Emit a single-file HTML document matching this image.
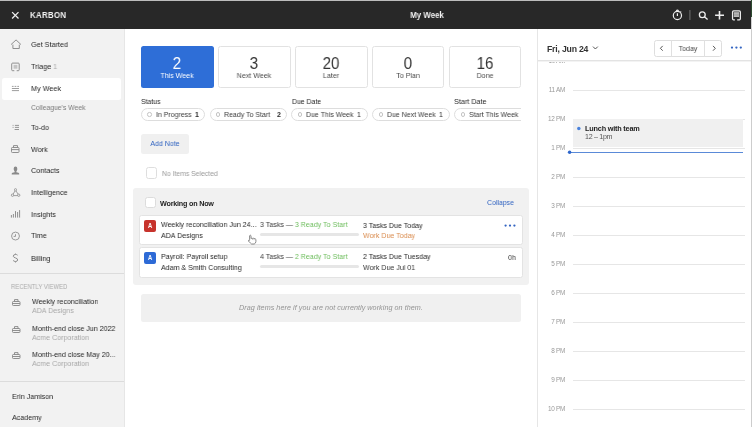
<!DOCTYPE html>
<html><head><meta charset="utf-8"><style>
html,body{margin:0;padding:0;width:752px;height:427px;overflow:hidden;background:#fff;}
body{position:relative;font-family:"Liberation Sans", sans-serif;-webkit-font-smoothing:antialiased;}
.t{position:absolute;white-space:nowrap;-webkit-font-smoothing:antialiased;will-change:transform;}
.r{position:absolute;}
</style></head><body>
<div class="r" style="left:0px;top:0px;width:752px;height:29px;background:#282828"></div><div class="r" style="left:0px;top:0px;width:752px;height:1px;background:#bdbdbd"></div><div class="r" style="left:751px;top:0px;width:1px;height:17px;background:#2e4a30"></div><div class="r" style="left:751px;top:17px;width:1px;height:12px;background:#d0d0d0"></div><svg class="r" style="left:11px;top:11px" width="9" height="9" viewBox="0 0 9 9"><path d="M1.1 1.1L7.5 7.5M7.5 1.1L1.1 7.5" stroke="#eee" stroke-width="1.3"/></svg><div class="t" style="left:29.8px;top:10.79px;font-size:8.6px;line-height:8.6px;color:#f2f2f2;font-weight:bold;letter-spacing:0.3px;transform:scaleX(0.92);transform-origin:0 0;">KARBON</div><div class="t" style="left:326.6px;width:200px;text-align:center;top:11.15px;font-size:9px;line-height:9px;color:#f2f2f2;font-weight:bold;transform:scaleX(0.87);transform-origin:50% 0;">My Week</div><svg class="r" style="left:670px;top:7px" width="80" height="16" viewBox="670 7 80 16">
<circle cx="677.4" cy="15.5" r="4.1" fill="none" stroke="#eee" stroke-width="1.2"/>
<path d="M677.4 13.2V16" stroke="#eee" stroke-width="1.2"/>
<path d="M676.2 10.7Q677.4 9.7 678.6 10.7" stroke="#eee" stroke-width="1.3" fill="none"/>
<path d="M680.3 12.4L681.2 11.5" stroke="#ddd" stroke-width="1.1"/>
<path d="M689.9 10.1V19.9" stroke="#6a6a6a" stroke-width="1.1"/>
<circle cx="702.3" cy="14.7" r="2.9" fill="none" stroke="#eee" stroke-width="1.3"/>
<path d="M704.4 16.8L707.6 19.5" stroke="#eee" stroke-width="1.4"/>
<path d="M719.5 11V19.6M715.1 15.3H724" stroke="#eee" stroke-width="1.6"/>
<path d="M734.9 19.75H733.6Q732.55 19.75 732.55 18.7V11.9Q732.55 10.85 733.6 10.85H739.3Q740.35 10.85 740.35 11.9V18.7Q740.35 19.75 739.3 19.75H737.2" fill="none" stroke="#eee" stroke-width="1.25"/>
<rect x="733.8" y="12.6" width="5.2" height="4" fill="#a8a8a8"/>
<path d="M733.8 12.8H739M733.8 16.4H739" stroke="#e8e8e8" stroke-width="0.7"/>
</svg><div class="r" style="left:0px;top:29px;width:124px;height:398px;background:#f2f2f2"></div><div class="r" style="left:123.5px;top:29px;width:1px;height:398px;background:#e6e6e6"></div><div class="r" style="left:2px;top:78px;width:118.5px;height:21.5px;background:#fff;border-radius:2.5px"></div><div class="t" style="left:30.9px;top:40.90px;font-size:8px;line-height:8px;color:#262626;font-weight:normal;transform:scaleX(0.905);transform-origin:0 0;">Get Started</div><div class="t" style="left:30.9px;top:63.40px;font-size:8px;line-height:8px;color:#262626;font-weight:normal;transform:scaleX(0.905);transform-origin:0 0;">Triage <span style="color:#aaa">1</span></div><div class="t" style="left:30.9px;top:85.00px;font-size:8px;line-height:8px;color:#262626;font-weight:normal;transform:scaleX(0.905);transform-origin:0 0;">My Week</div><div class="t" style="left:30.9px;top:123.70px;font-size:8px;line-height:8px;color:#262626;font-weight:normal;transform:scaleX(0.905);transform-origin:0 0;">To-do</div><div class="t" style="left:30.9px;top:145.60px;font-size:8px;line-height:8px;color:#262626;font-weight:normal;transform:scaleX(0.905);transform-origin:0 0;">Work</div><div class="t" style="left:30.9px;top:167.20px;font-size:8px;line-height:8px;color:#262626;font-weight:normal;transform:scaleX(0.905);transform-origin:0 0;">Contacts</div><div class="t" style="left:30.9px;top:188.90px;font-size:8px;line-height:8px;color:#262626;font-weight:normal;transform:scaleX(0.905);transform-origin:0 0;">Intelligence</div><div class="t" style="left:30.9px;top:210.70px;font-size:8px;line-height:8px;color:#262626;font-weight:normal;transform:scaleX(0.905);transform-origin:0 0;">Insights</div><div class="t" style="left:30.9px;top:232.20px;font-size:8px;line-height:8px;color:#262626;font-weight:normal;transform:scaleX(0.905);transform-origin:0 0;">Time</div><div class="t" style="left:30.9px;top:254.50px;font-size:8px;line-height:8px;color:#262626;font-weight:normal;transform:scaleX(0.905);transform-origin:0 0;">Billing</div><div class="t" style="left:30.9px;top:104.40px;font-size:8px;line-height:8px;color:#7a7a7a;font-weight:normal;transform:scaleX(0.85);transform-origin:0 0;">Colleague&#39;s Week</div><svg class="r" style="left:0;top:29px" width="124" height="250" viewBox="0 29 124 250">
<path d="M11 44.6L16.05 39.9L21 44.6M12.9 44.6V48.5H19.3V44.6" fill="none" stroke="#8a8a8a" stroke-width="0.95" stroke-linejoin="round"/>
<path d="M14.3 70.7H12.6Q11.7 70.7 11.7 69.8V64Q11.7 63.1 12.6 63.1H18.3Q19.2 63.1 19.2 64V69.8Q19.2 70.7 18.3 70.7H16.7" fill="none" stroke="#8a8a8a" stroke-width="0.95"/>
<rect x="13.6" y="64.9" width="3.8" height="3.8" fill="#c4c4c4"/>
<path d="M11.9 86.4H13.6M14.6 86.4H16.3M17.3 86.4H19M11.9 88.5H19M11.9 90.6H19" stroke="#999" stroke-width="0.95"/>
<path d="M12.3 125.4H14M12.3 127.4H14" stroke="#bbb" stroke-width="0.9"/>
<path d="M14.9 125.4H19M14.9 127.4H19M14.6 129.5H19" stroke="#8a8a8a" stroke-width="0.9"/>
<rect x="11.5" y="147.5" width="7.5" height="5" rx="0.8" fill="none" stroke="#8a8a8a" stroke-width="0.95"/>
<path d="M13.5 147.5V145.6H17.5V147.5M11.5 149.6H19" stroke="#8a8a8a" stroke-width="0.95" fill="none"/>
<ellipse cx="15.5" cy="169" rx="1.85" ry="2.4" fill="#8a8a8a"/>
<path d="M14.6 170.8V172.2Q11.7 172.3 11.7 173.6V174.5H19.2V173.6Q19.2 172.3 16.4 172.2V170.8Z" fill="#8a8a8a"/>
<rect x="14.5" y="188.7" width="2" height="2.2" rx="0.8" fill="none" stroke="#8a8a8a" stroke-width="0.8"/>
<circle cx="12.5" cy="195.2" r="1.2" fill="none" stroke="#8a8a8a" stroke-width="0.8"/>
<circle cx="18.7" cy="195.2" r="1.2" fill="none" stroke="#8a8a8a" stroke-width="0.8"/>
<path d="M15 191L13.1 194.1M16 191L18.1 194.1M13.7 195.6H17.5" stroke="#8a8a8a" stroke-width="0.8"/>
<path d="M11.4 217.6V215M13.4 217.6V214M15.5 217.6V211.1M17.6 217.6V212M19.6 217.6V210.1" stroke="#8a8a8a" stroke-width="0.95"/>
<circle cx="15.5" cy="236.05" r="3.95" fill="none" stroke="#8a8a8a" stroke-width="0.85"/>
<path d="M15.5 234.2V236.4H13.6" stroke="#8a8a8a" stroke-width="0.85" fill="none"/>
<path d="M17.6 255.2Q16.8 254.4 15.4 254.4Q13.2 254.6 13.3 256.3Q13.5 257.3 15.4 257.9Q17.8 258.6 17.7 260Q17.5 261.5 15.4 261.5Q13.8 261.4 13.1 260.4M15.5 253.6V254.5M15.5 261.5V262.5" stroke="#8a8a8a" stroke-width="0.95" fill="none"/>
</svg><div class="r" style="left:0px;top:273px;width:124px;height:1px;background:#dcdcdc"></div><div class="t" style="left:11px;top:283.62px;font-size:6.8px;line-height:6.8px;color:#aaa;font-weight:normal;transform:scaleX(0.875);transform-origin:0 0;">RECENTLY VIEWED</div><div class="t" style="left:32.1px;top:298.00px;font-size:8px;line-height:8px;color:#262626;font-weight:normal;transform:scaleX(0.885);transform-origin:0 0;">Weekly reconciliation</div><div class="t" style="left:32.1px;top:307.30px;font-size:8px;line-height:8px;color:#a8a8a8;font-weight:normal;transform:scaleX(0.885);transform-origin:0 0;">ADA Designs</div><div class="t" style="left:32.1px;top:324.90px;font-size:8px;line-height:8px;color:#262626;font-weight:normal;transform:scaleX(0.885);transform-origin:0 0;">Month-end close Jun 2022</div><div class="t" style="left:32.1px;top:333.80px;font-size:8px;line-height:8px;color:#a8a8a8;font-weight:normal;transform:scaleX(0.885);transform-origin:0 0;">Acme Corporation</div><div class="t" style="left:32.1px;top:351.10px;font-size:8px;line-height:8px;color:#262626;font-weight:normal;transform:scaleX(0.885);transform-origin:0 0;">Month-end close May 20...</div><div class="t" style="left:32.1px;top:360.00px;font-size:8px;line-height:8px;color:#a8a8a8;font-weight:normal;transform:scaleX(0.885);transform-origin:0 0;">Acme Corporation</div><svg class="r" style="left:0;top:0" width="124" height="427"><rect x="12.5" y="301.5" width="7.5" height="4" rx="0.8" fill="none" stroke="#8a8a8a" stroke-width="0.95"/><path d="M14.5 301.5V299.6H18V301.5M12.5 303.5H20" stroke="#8a8a8a" stroke-width="0.95" fill="none"/><rect x="12.5" y="328.5" width="7.5" height="4" rx="0.8" fill="none" stroke="#8a8a8a" stroke-width="0.95"/><path d="M14.5 328.5V326.6H18V328.5M12.5 330.5H20" stroke="#8a8a8a" stroke-width="0.95" fill="none"/><rect x="12.5" y="354.5" width="7.5" height="4" rx="0.8" fill="none" stroke="#8a8a8a" stroke-width="0.95"/><path d="M14.5 354.5V352.6H18V354.5M12.5 356.5H20" stroke="#8a8a8a" stroke-width="0.95" fill="none"/></svg><div class="r" style="left:0px;top:381px;width:124px;height:1px;background:#dcdcdc"></div><div class="t" style="left:12.1px;top:392.80px;font-size:8px;line-height:8px;color:#262626;font-weight:normal;transform:scaleX(0.89);transform-origin:0 0;">Erin Jamison</div><div class="t" style="left:12.1px;top:413.60px;font-size:8px;line-height:8px;color:#262626;font-weight:normal;transform:scaleX(0.89);transform-origin:0 0;">Academy</div><div class="r" style="left:141px;top:46.2px;width:72.5px;height:41.5px;background:#2e6ed7;border-radius:2.5px"></div><div class="t" style="left:77.25px;width:200px;text-align:center;top:55.67px;font-size:15.8px;line-height:15.8px;color:#fff;font-weight:normal;transform:scaleX(0.95);transform-origin:50% 0;">2</div><div class="t" style="left:77.25px;width:200px;text-align:center;top:72.47px;font-size:7.8px;line-height:7.8px;color:#fff;font-weight:normal;transform:scaleX(0.91);transform-origin:50% 0;">This Week</div><div class="r" style="left:218px;top:46.2px;width:72.5px;height:41.5px;background:#fff;border:1px solid #e2e2e2;border-radius:2.5px;box-sizing:border-box"></div><div class="t" style="left:154.25px;width:200px;text-align:center;top:55.67px;font-size:15.8px;line-height:15.8px;color:#333;font-weight:normal;transform:scaleX(0.95);transform-origin:50% 0;">3</div><div class="t" style="left:154.25px;width:200px;text-align:center;top:72.47px;font-size:7.8px;line-height:7.8px;color:#4a4a4a;font-weight:normal;transform:scaleX(0.91);transform-origin:50% 0;">Next Week</div><div class="r" style="left:295px;top:46.2px;width:72.5px;height:41.5px;background:#fff;border:1px solid #e2e2e2;border-radius:2.5px;box-sizing:border-box"></div><div class="t" style="left:231.25px;width:200px;text-align:center;top:55.67px;font-size:15.8px;line-height:15.8px;color:#333;font-weight:normal;transform:scaleX(0.95);transform-origin:50% 0;">20</div><div class="t" style="left:231.25px;width:200px;text-align:center;top:72.47px;font-size:7.8px;line-height:7.8px;color:#4a4a4a;font-weight:normal;transform:scaleX(0.91);transform-origin:50% 0;">Later</div><div class="r" style="left:371.5px;top:46.2px;width:72.5px;height:41.5px;background:#fff;border:1px solid #e2e2e2;border-radius:2.5px;box-sizing:border-box"></div><div class="t" style="left:307.75px;width:200px;text-align:center;top:55.67px;font-size:15.8px;line-height:15.8px;color:#333;font-weight:normal;transform:scaleX(0.95);transform-origin:50% 0;">0</div><div class="t" style="left:307.75px;width:200px;text-align:center;top:72.47px;font-size:7.8px;line-height:7.8px;color:#4a4a4a;font-weight:normal;transform:scaleX(0.91);transform-origin:50% 0;">To Plan</div><div class="r" style="left:448.5px;top:46.2px;width:72.5px;height:41.5px;background:#fff;border:1px solid #e2e2e2;border-radius:2.5px;box-sizing:border-box"></div><div class="t" style="left:384.75px;width:200px;text-align:center;top:55.67px;font-size:15.8px;line-height:15.8px;color:#333;font-weight:normal;transform:scaleX(0.95);transform-origin:50% 0;">16</div><div class="t" style="left:384.75px;width:200px;text-align:center;top:72.47px;font-size:7.8px;line-height:7.8px;color:#4a4a4a;font-weight:normal;transform:scaleX(0.91);transform-origin:50% 0;">Done</div><div class="t" style="left:141px;top:98.22px;font-size:7.5px;line-height:7.5px;color:#262626;font-weight:normal;transform:scaleX(0.92);transform-origin:0 0;">Status</div><div class="t" style="left:291.8px;top:98.22px;font-size:7.5px;line-height:7.5px;color:#262626;font-weight:normal;transform:scaleX(0.92);transform-origin:0 0;">Due Date</div><div class="t" style="left:454px;top:98.22px;font-size:7.5px;line-height:7.5px;color:#262626;font-weight:normal;transform:scaleX(0.965);transform-origin:0 0;">Start Date</div><div class="r" style="left:0;top:0;width:521px;height:427px;overflow:hidden"><div class="r" style="left:141px;top:108px;width:64.19999999999999px;height:12.5px;border:1px solid #dddddd;border-radius:6.5px;box-sizing:border-box;background:#fff"></div><div class="r" style="left:147.4px;top:112.3px;width:4.5px;height:4.5px;border:0.8px solid #c4c4c4;border-radius:50%;box-sizing:border-box"></div><div class="t" style="left:155.8px;top:111.33px;font-size:7.5px;line-height:7.5px;color:#3a3a3a;font-weight:normal;transform:scaleX(0.93);transform-origin:0 0;">In Progress</div><div class="t" style="left:-1.3000000000000114px;width:200px;text-align:right;top:111.33px;font-size:7.5px;line-height:7.5px;color:#262626;font-weight:bold;transform:scaleX(0.93);transform-origin:100% 0;">1</div><div class="r" style="left:209.5px;top:108px;width:77.60000000000002px;height:12.5px;border:1px solid #dddddd;border-radius:6.5px;box-sizing:border-box;background:#fff"></div><div class="r" style="left:215.9px;top:112.3px;width:4.5px;height:4.5px;border:0.8px solid #c4c4c4;border-radius:50%;box-sizing:border-box"></div><div class="t" style="left:224.3px;top:111.33px;font-size:7.5px;line-height:7.5px;color:#3a3a3a;font-weight:normal;transform:scaleX(0.93);transform-origin:0 0;">Ready To Start</div><div class="t" style="left:80.60000000000002px;width:200px;text-align:right;top:111.33px;font-size:7.5px;line-height:7.5px;color:#262626;font-weight:bold;transform:scaleX(0.93);transform-origin:100% 0;">2</div><div class="r" style="left:291.4px;top:108px;width:76.20000000000005px;height:12.5px;border:1px solid #dddddd;border-radius:6.5px;box-sizing:border-box;background:#fff"></div><div class="r" style="left:297.79999999999995px;top:112.3px;width:4.5px;height:4.5px;border:0.8px solid #c4c4c4;border-radius:50%;box-sizing:border-box"></div><div class="t" style="left:306.2px;top:111.33px;font-size:7.5px;line-height:7.5px;color:#3a3a3a;font-weight:normal;transform:scaleX(0.93);transform-origin:0 0;">Due This Week</div><div class="t" style="left:161.10000000000002px;width:200px;text-align:right;top:111.33px;font-size:7.5px;line-height:7.5px;color:#262626;font-weight:normal;transform:scaleX(0.93);transform-origin:100% 0;">1</div><div class="r" style="left:372.2px;top:108px;width:77.60000000000002px;height:12.5px;border:1px solid #dddddd;border-radius:6.5px;box-sizing:border-box;background:#fff"></div><div class="r" style="left:378.59999999999997px;top:112.3px;width:4.5px;height:4.5px;border:0.8px solid #c4c4c4;border-radius:50%;box-sizing:border-box"></div><div class="t" style="left:387.0px;top:111.33px;font-size:7.5px;line-height:7.5px;color:#3a3a3a;font-weight:normal;transform:scaleX(0.93);transform-origin:0 0;">Due Next Week</div><div class="t" style="left:243.3px;width:200px;text-align:right;top:111.33px;font-size:7.5px;line-height:7.5px;color:#262626;font-weight:normal;transform:scaleX(0.93);transform-origin:100% 0;">1</div><div class="r" style="left:454.2px;top:108px;width:85.80000000000001px;height:12.5px;border:1px solid #dddddd;border-radius:6.5px;box-sizing:border-box;background:#fff"></div><div class="r" style="left:460.59999999999997px;top:112.3px;width:4.5px;height:4.5px;border:0.8px solid #c4c4c4;border-radius:50%;box-sizing:border-box"></div><div class="t" style="left:469.0px;top:111.33px;font-size:7.5px;line-height:7.5px;color:#3a3a3a;font-weight:normal;transform:scaleX(0.93);transform-origin:0 0;">Start This Week</div></div><div class="r" style="left:141px;top:134px;width:48px;height:20px;background:#f0f0f0;border-radius:2.5px"></div><div class="t" style="left:65px;width:200px;text-align:center;top:140.43px;font-size:7.5px;line-height:7.5px;color:#2f62c0;font-weight:normal;transform:scaleX(0.93);transform-origin:50% 0;">Add Note</div><div class="r" style="left:146px;top:167px;width:11px;height:11.5px;border:1px solid #dedede;border-radius:2.5px;box-sizing:border-box;background:#fff"></div><div class="t" style="left:161.6px;top:169.72px;font-size:7.5px;line-height:7.5px;color:#999;font-weight:normal;transform:scaleX(0.91);transform-origin:0 0;">No Items Selected</div><div class="r" style="left:133px;top:188px;width:396px;height:97px;background:#f1f1f1;border-radius:3px"></div><div class="r" style="left:145px;top:197px;width:11px;height:11px;border:1px solid #dcdcdc;border-radius:2.5px;box-sizing:border-box;background:#fff"></div><div class="t" style="left:160px;top:199.88px;font-size:7.2px;line-height:7.2px;color:#222;font-weight:bold;letter-spacing:-0.2px;">Working on Now</div><div class="t" style="left:314.1px;width:200px;text-align:right;top:199.26px;font-size:7.7px;line-height:7.7px;color:#2f62c0;font-weight:normal;transform:scaleX(0.9);transform-origin:100% 0;">Collapse</div><div class="r" style="left:139px;top:215px;width:384px;height:30px;background:#fff;border:1px solid #e3e3e3;border-radius:2.5px;box-sizing:border-box"></div><div class="r" style="left:144px;top:219.7px;width:12.2px;height:12.2px;background:#c7332c;border-radius:2px"></div><div class="t" style="left:50.099999999999994px;width:200px;text-align:center;top:223.26px;font-size:6.4px;line-height:6.4px;color:#fff;font-weight:bold;transform:scaleX(0.92);transform-origin:50% 0;">A</div><div class="t" style="left:160.9px;top:221.10px;font-size:8px;line-height:8px;color:#262626;font-weight:normal;transform:scaleX(0.885);transform-origin:0 0;">Weekly reconciliation Jun 24...</div><div class="t" style="left:160.9px;top:232.20px;font-size:8px;line-height:8px;color:#262626;font-weight:normal;transform:scaleX(0.885);transform-origin:0 0;">ADA Designs</div><div class="t" style="left:259.8px;top:221.10px;font-size:8px;line-height:8px;color:#3a3a3a;font-weight:normal;transform:scaleX(0.885);transform-origin:0 0;">3 Tasks — <span style="color:#6dbd5c">3 Ready To Start</span></div><div class="r" style="left:260px;top:233px;width:99px;height:3px;background:#e6e6e6;border-radius:1.5px"></div><div class="t" style="left:363.2px;top:221.50px;font-size:8px;line-height:8px;color:#262626;font-weight:normal;transform:scaleX(0.885);transform-origin:0 0;">3 Tasks Due Today</div><div class="t" style="left:363.2px;top:232.20px;font-size:8px;line-height:8px;color:#d98a4c;font-weight:normal;transform:scaleX(0.885);transform-origin:0 0;">Work Due Today</div><div class="r" style="left:139px;top:247px;width:384px;height:31px;background:#fff;border:1px solid #e3e3e3;border-radius:2.5px;box-sizing:border-box"></div><div class="r" style="left:144px;top:251.6px;width:12.2px;height:12.2px;background:#2d6ad6;border-radius:2px"></div><div class="t" style="left:50.099999999999994px;width:200px;text-align:center;top:255.16px;font-size:6.4px;line-height:6.4px;color:#fff;font-weight:bold;transform:scaleX(0.92);transform-origin:50% 0;">A</div><div class="t" style="left:160.9px;top:253.00px;font-size:8px;line-height:8px;color:#262626;font-weight:normal;transform:scaleX(0.885);transform-origin:0 0;">Payroll: Payroll setup</div><div class="t" style="left:160.9px;top:264.10px;font-size:8px;line-height:8px;color:#262626;font-weight:normal;transform:scaleX(0.885);transform-origin:0 0;">Adam &amp; Smith Consulting</div><div class="t" style="left:259.8px;top:253.00px;font-size:8px;line-height:8px;color:#3a3a3a;font-weight:normal;transform:scaleX(0.885);transform-origin:0 0;">4 Tasks — <span style="color:#6dbd5c">2 Ready To Start</span></div><div class="r" style="left:260px;top:265px;width:99px;height:3px;background:#e6e6e6;border-radius:1.5px"></div><div class="t" style="left:363.2px;top:253.40px;font-size:8px;line-height:8px;color:#262626;font-weight:normal;transform:scaleX(0.885);transform-origin:0 0;">2 Tasks Due Tuesday</div><div class="t" style="left:363.2px;top:264.10px;font-size:8px;line-height:8px;color:#333;font-weight:normal;transform:scaleX(0.885);transform-origin:0 0;">Work Due Jul 01</div><div class="t" style="left:316.1px;width:200px;text-align:right;top:253.70px;font-size:8px;line-height:8px;color:#3a3a3a;font-weight:normal;transform:scaleX(0.885);transform-origin:100% 0;">0h</div><div class="r" style="left:141.2px;top:293.8px;width:379.6px;height:28px;background:#f0f0f0;border-radius:2.5px"></div><div class="t" style="left:231px;width:200px;text-align:center;top:304.38px;font-size:7.2px;line-height:7.2px;color:#939393;font-weight:normal;font-style:italic;letter-spacing:0.05px;">Drag items here if you are not currently working on them.</div><svg class="r" style="left:246px;top:233px" width="13" height="13" viewBox="0 0 13 13">
<path d="M3.6 6.6V2.7Q4.3 1.7 5 2.7V5.6Q5.7 4.9 6.5 5.4Q7.3 4.9 8 5.6Q9.3 5.3 9.9 6.4V8.6Q9.7 10.4 8.2 11H5.6Q4.6 10.4 2.4 8Q2.1 7 3.6 7.3Z" fill="#fff" stroke="#666" stroke-width="0.75" stroke-linejoin="round"/>
<path d="M6.5 5.4V7M8 5.6V7.2" stroke="#999" stroke-width="0.5"/>
</svg><div class="r" style="left:537px;top:29px;width:1px;height:398px;background:#e6e6e6"></div><div class="r" style="left:751px;top:29px;width:1px;height:398px;background:#cdcdcd"></div><div class="t" style="left:365px;width:200px;text-align:right;top:87.06px;font-size:6.4px;line-height:6.4px;color:#999;font-weight:normal;letter-spacing:-0.3px;">11 AM</div><div class="r" style="left:572.5px;top:90px;width:172px;height:1px;background:#e6e6e6"></div><div class="t" style="left:365px;width:200px;text-align:right;top:116.09px;font-size:6.4px;line-height:6.4px;color:#999;font-weight:normal;letter-spacing:-0.3px;">12 PM</div><div class="r" style="left:572.5px;top:119px;width:172px;height:1px;background:#e6e6e6"></div><div class="t" style="left:365px;width:200px;text-align:right;top:145.12px;font-size:6.4px;line-height:6.4px;color:#999;font-weight:normal;letter-spacing:-0.3px;">1 PM</div><div class="r" style="left:572.5px;top:148px;width:172px;height:1px;background:#e6e6e6"></div><div class="t" style="left:365px;width:200px;text-align:right;top:174.15px;font-size:6.4px;line-height:6.4px;color:#999;font-weight:normal;letter-spacing:-0.3px;">2 PM</div><div class="r" style="left:572.5px;top:177px;width:172px;height:1px;background:#e6e6e6"></div><div class="t" style="left:365px;width:200px;text-align:right;top:203.18px;font-size:6.4px;line-height:6.4px;color:#999;font-weight:normal;letter-spacing:-0.3px;">3 PM</div><div class="r" style="left:572.5px;top:206px;width:172px;height:1px;background:#e6e6e6"></div><div class="t" style="left:365px;width:200px;text-align:right;top:232.21px;font-size:6.4px;line-height:6.4px;color:#999;font-weight:normal;letter-spacing:-0.3px;">4 PM</div><div class="r" style="left:572.5px;top:235px;width:172px;height:1px;background:#e6e6e6"></div><div class="t" style="left:365px;width:200px;text-align:right;top:261.24px;font-size:6.4px;line-height:6.4px;color:#999;font-weight:normal;letter-spacing:-0.3px;">5 PM</div><div class="r" style="left:572.5px;top:264px;width:172px;height:1px;background:#e6e6e6"></div><div class="t" style="left:365px;width:200px;text-align:right;top:290.27px;font-size:6.4px;line-height:6.4px;color:#999;font-weight:normal;letter-spacing:-0.3px;">6 PM</div><div class="r" style="left:572.5px;top:293px;width:172px;height:1px;background:#e6e6e6"></div><div class="t" style="left:365px;width:200px;text-align:right;top:319.30px;font-size:6.4px;line-height:6.4px;color:#999;font-weight:normal;letter-spacing:-0.3px;">7 PM</div><div class="r" style="left:572.5px;top:322px;width:172px;height:1px;background:#e6e6e6"></div><div class="t" style="left:365px;width:200px;text-align:right;top:348.33px;font-size:6.4px;line-height:6.4px;color:#999;font-weight:normal;letter-spacing:-0.3px;">8 PM</div><div class="r" style="left:572.5px;top:351px;width:172px;height:1px;background:#e6e6e6"></div><div class="t" style="left:365px;width:200px;text-align:right;top:377.36px;font-size:6.4px;line-height:6.4px;color:#999;font-weight:normal;letter-spacing:-0.3px;">9 PM</div><div class="r" style="left:572.5px;top:380px;width:172px;height:1px;background:#e6e6e6"></div><div class="t" style="left:365px;width:200px;text-align:right;top:406.39px;font-size:6.4px;line-height:6.4px;color:#999;font-weight:normal;letter-spacing:-0.3px;">10 PM</div><div class="r" style="left:572.5px;top:409px;width:172px;height:1px;background:#e6e6e6"></div><div class="t" style="left:365px;width:200px;text-align:right;top:57.96px;font-size:6.4px;line-height:6.4px;color:#999;font-weight:normal;letter-spacing:-0.3px;">10 AM</div><div class="r" style="left:538px;top:29px;width:212.5px;height:31.3px;background:#fff"></div><div class="r" style="left:538px;top:60px;width:213px;height:1px;background:#e3e3e3"></div><div class="r" style="left:538px;top:61px;width:213px;height:1px;background:#f3f3f3"></div><div class="t" style="left:546.9px;top:44.91px;font-size:8.7px;line-height:8.7px;color:#333;font-weight:bold;letter-spacing:-0.2px;">Fri, Jun 24</div><svg class="r" style="left:592px;top:45px" width="7" height="6"><path d="M1 1.6L3.4 4L5.8 1.6" stroke="#444" stroke-width="0.9" fill="none"/></svg><div class="r" style="left:654.2px;top:40.3px;width:67.6px;height:16.3px;border:0.8px solid #dedede;border-radius:2.5px;box-sizing:border-box"></div><div class="r" style="left:671px;top:40.3px;width:1px;height:16.3px;background:#e0e0e0"></div><div class="r" style="left:704px;top:40.3px;width:1px;height:16.3px;background:#e0e0e0"></div><svg class="r" style="left:654px;top:40px" width="68" height="17"><path d="M8.7 5.9L6.4 8.3L8.7 10.7M59 5.9L61.3 8.3L59 10.7" stroke="#444" stroke-width="0.9" fill="none"/></svg><div class="t" style="left:588px;width:200px;text-align:center;top:45.17px;font-size:7.8px;line-height:7.8px;color:#4a4a4a;font-weight:normal;transform:scaleX(0.9);transform-origin:50% 0;">Today</div><svg class="r" style="left:0;top:0" width="752" height="427"><g fill="#3566c2"><circle cx="732" cy="47.6" r="1.15"/><circle cx="736.4" cy="47.6" r="1.15"/><circle cx="740.8" cy="47.6" r="1.15"/><circle cx="505.6" cy="225.6" r="1.15"/><circle cx="510" cy="225.6" r="1.15"/><circle cx="514.4" cy="225.6" r="1.15"/></g></svg><div class="r" style="left:572.6px;top:119px;width:170.4px;height:27.9px;background:#f0f0f0"></div><svg class="r" style="left:570px;top:120px" width="20" height="20"><circle cx="8.8" cy="8.5" r="1.75" fill="#4a82dc"/></svg><div class="t" style="left:585.2px;top:125.20px;font-size:7.3px;line-height:7.3px;color:#222;font-weight:bold;letter-spacing:-0.2px;">Lunch with team</div><div class="t" style="left:585.2px;top:134.47px;font-size:7.1px;line-height:7.1px;color:#555;font-weight:normal;letter-spacing:-0.3px;">12 – 1pm</div><div class="r" style="left:570px;top:151.7px;width:173px;height:1.1px;background:#5a8ad8"></div><svg class="r" style="left:560px;top:145px" width="20" height="15"><circle cx="9.6" cy="7.2" r="1.75" fill="#2d66cc"/></svg>
</body></html>
